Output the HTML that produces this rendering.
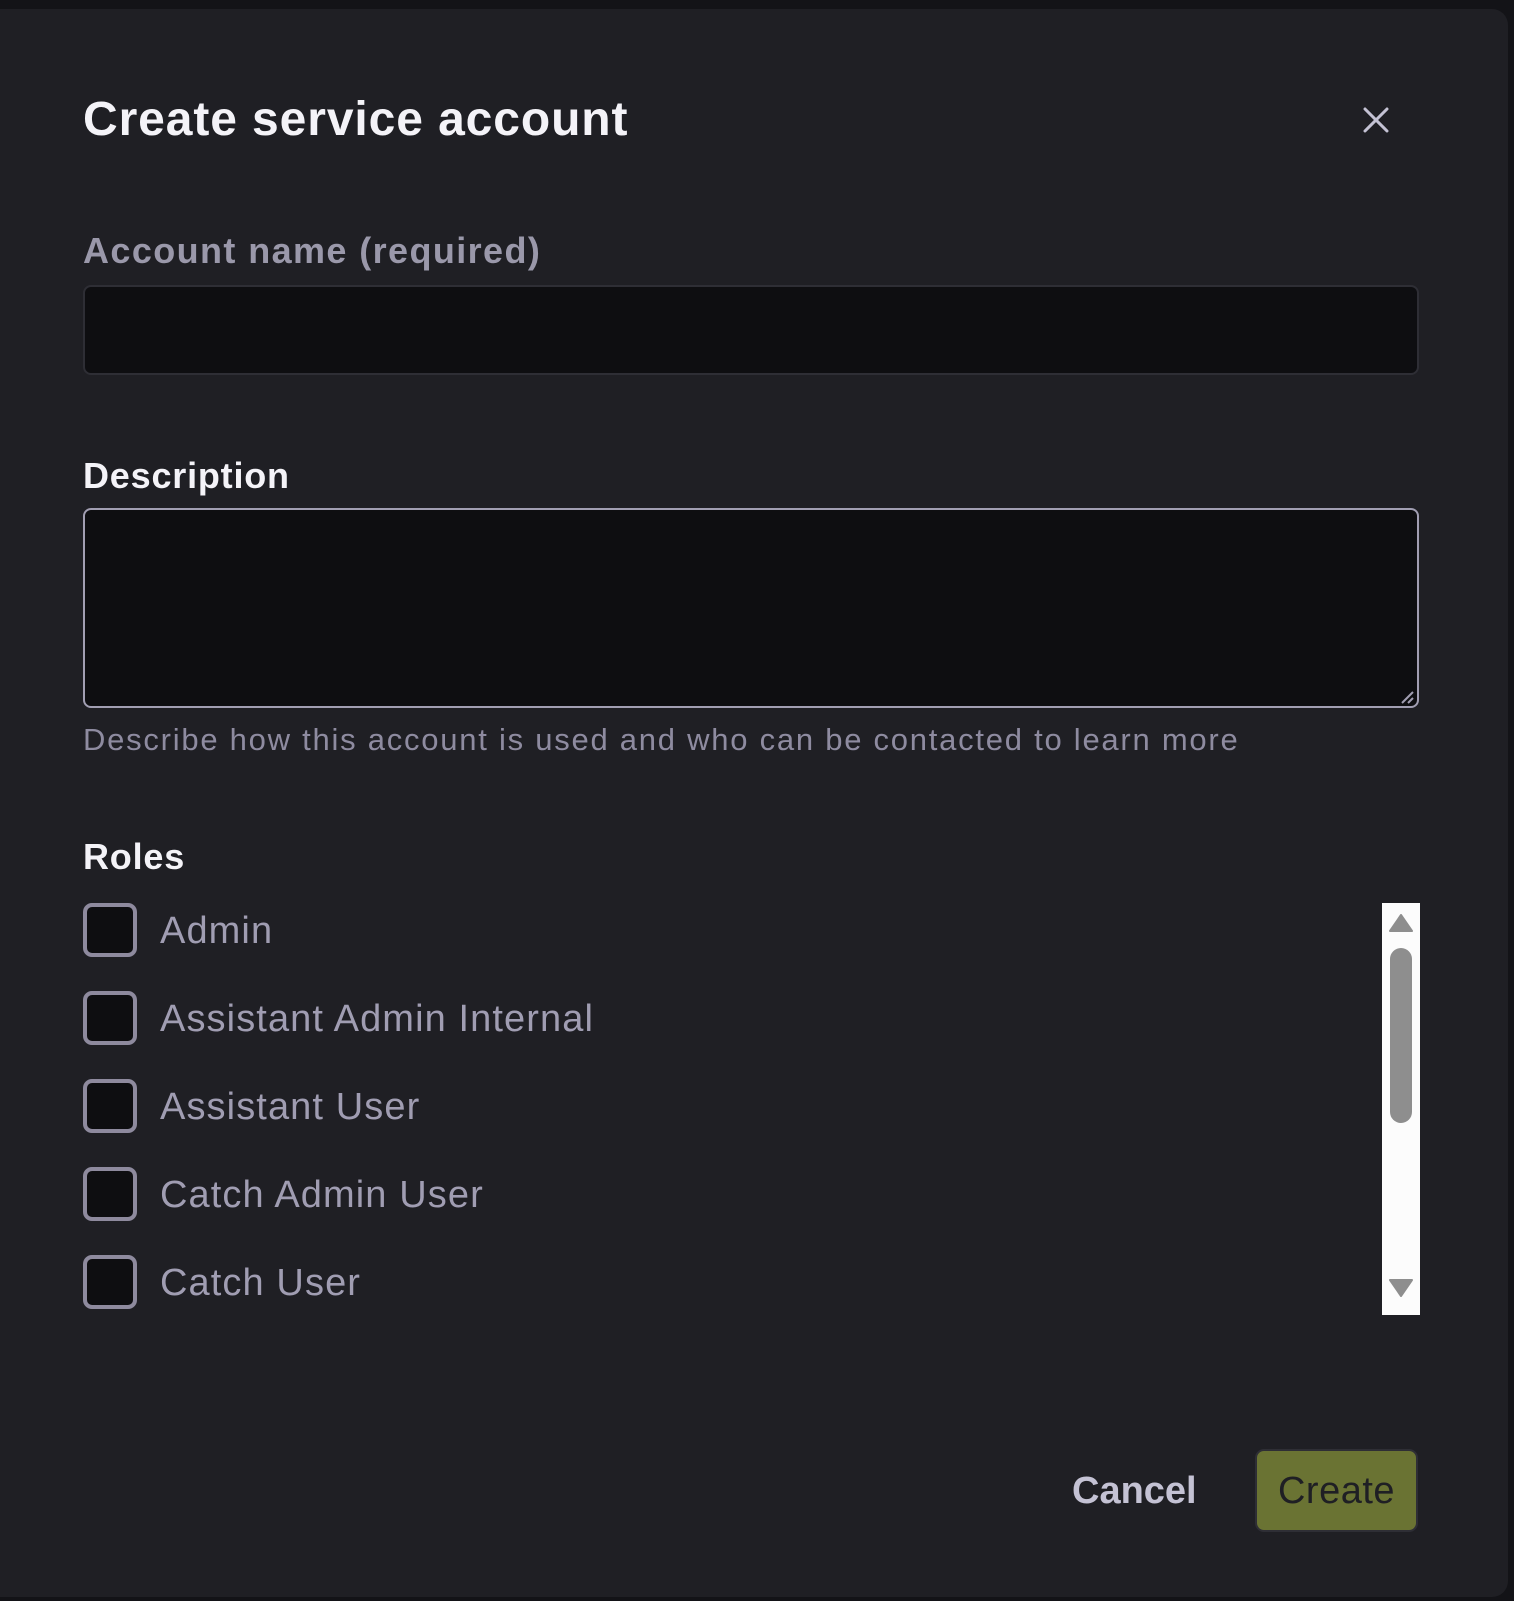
<!DOCTYPE html>
<html><head><meta charset="utf-8"><style>
*{margin:0;padding:0;box-sizing:border-box}
body{width:1514px;height:1601px;background:#131317;font-family:"Liberation Sans",sans-serif;position:relative;overflow:hidden}
.dlg{position:absolute;left:-20px;top:9px;width:1528px;height:1588px;background:#1f1f24;border-radius:0 16px 16px 0}
.a{position:absolute;white-space:nowrap}
.cb{position:absolute;left:83px;width:54px;height:54px;border:4px solid #8e8a9e;border-radius:9px;background:#0e0e11}
.lbl{position:absolute;left:160px;font-size:38px;color:#a09db2;line-height:54px;letter-spacing:1.1px;top:1px}
</style></head><body>
<div class="dlg"></div>
<div class="a" style="left:83px;top:92px;font-size:48px;font-weight:bold;color:#f4f3f8;letter-spacing:0.9px">Create service account</div>
<svg class="a" style="left:1362px;top:106px" width="28" height="28" viewBox="0 0 28 28"><path d="M3 3L25 25M25 3L3 25" stroke="#c4c2d4" stroke-width="3" stroke-linecap="round"/></svg>
<div class="a" style="left:83px;top:230px;font-size:36px;font-weight:bold;color:#9a98aa;letter-spacing:1.4px">Account name (required)</div>
<div class="a" style="left:83px;top:285px;width:1336px;height:90px;background:#0e0e11;border:2px solid #2e2e35;border-radius:8px"></div>
<div class="a" style="left:83px;top:455px;font-size:36px;font-weight:bold;color:#f4f3f8;letter-spacing:0.8px">Description</div>
<div class="a" style="left:83px;top:508px;width:1336px;height:200px;background:#0e0e11;border:2px solid #a19eb2;border-radius:8px"></div>
<svg class="a" style="left:1400px;top:690px" width="14" height="14"><path d="M2 13L13 2M8 13L13 8" stroke="#a19eb2" stroke-width="2"/></svg>
<div class="a" style="left:83px;top:722px;font-size:31px;color:#8e8ba0;letter-spacing:1.75px">Describe how this account is used and who can be contacted to learn more</div>
<div class="a" style="left:83px;top:836px;font-size:36px;font-weight:bold;color:#f4f3f8;letter-spacing:0.8px">Roles</div>
<div class="cb" style="top:903px"></div><div class="lbl" style="top:904px">Admin</div>
<div class="cb" style="top:991px"></div><div class="lbl" style="top:992px">Assistant Admin Internal</div>
<div class="cb" style="top:1079px"></div><div class="lbl" style="top:1080px">Assistant User</div>
<div class="cb" style="top:1167px"></div><div class="lbl" style="top:1168px">Catch Admin User</div>
<div class="cb" style="top:1255px"></div><div class="lbl" style="top:1256px">Catch User</div>
<div class="a" style="left:1382px;top:903px;width:38px;height:412px;background:#fcfcfc"></div>
<svg class="a" style="left:1388px;top:913px" width="26" height="20"><path d="M13 2L24 18H2Z" fill="#8e8e8e" stroke="#8e8e8e" stroke-width="2" stroke-linejoin="round"/></svg>
<div class="a" style="left:1390px;top:948px;width:22px;height:175px;background:#8e8e8e;border-radius:11px"></div>
<svg class="a" style="left:1388px;top:1278px" width="26" height="20"><path d="M2 2H24L13 18Z" fill="#8e8e8e" stroke="#8e8e8e" stroke-width="2" stroke-linejoin="round"/></svg>
<div class="a" style="left:1072px;top:1470px;font-size:38px;font-weight:bold;color:#c4c2d4">Cancel</div>
<div class="a" style="left:1255px;top:1449px;width:163px;height:83px;background:#6a7333;border:2px solid #2e2e35;border-radius:9px;font-size:38px;color:#1f1f24;text-align:center;line-height:81px;letter-spacing:0.5px">Create</div>
</body></html>
